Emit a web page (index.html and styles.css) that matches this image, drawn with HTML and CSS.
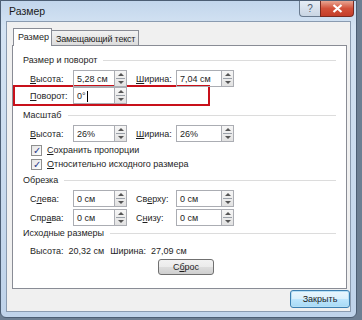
FILE: index.html
```html
<!DOCTYPE html>
<html lang="ru">
<head>
    <meta charset="UTF-8">
    <title>Размер</title>
    <link rel="stylesheet" href="styles.css">
</head>
<body>
    <div class="window">
        <div class="titlebar">
            <span class="title">Размер</span>
            <div class="caption-buttons">
                <span class="cap-btn help">?</span>
                <span class="cap-btn close">
                    <svg width="11" height="9" viewBox="0 0 11 9"><path d="M1.5 1 L9.5 8 M9.5 1 L1.5 8" stroke="#fff" stroke-width="2.2"/></svg>
                </span>
            </div>
        </div>

        <div class="client">
            <div class="tabs">
                <span class="tab active">Размер</span>
                <span class="tab">Замещающий текст</span>
            </div>

            <div class="panel">
                <!-- Размер и поворот -->
                <div class="group-title">Размер и поворот</div>
                <div class="row first">
                    <span class="label"><u>В</u>ысота:</span>
                    <span class="field"><span class="input">5,28 см</span><span class="spin"></span></span>
                    <span class="label second"><u>Ш</u>ирина:</span>
                    <span class="field"><span class="input wide">7,04 см</span><span class="spin"></span></span>
                </div>
                <div class="row highlight">
                    <span class="label"><u>П</u>оворот:</span>
                    <span class="field"><span class="input">0°<span class="caret"></span></span><span class="spin"></span></span>
                </div>

                <!-- Масштаб -->
                <div class="group-title">Масштаб</div>
                <div class="row first">
                    <span class="label"><u>В</u>ысота:</span>
                    <span class="field"><span class="input">26%</span><span class="spin"></span></span>
                    <span class="label second"><u>Ш</u>ирина:</span>
                    <span class="field"><span class="input wide">26%</span><span class="spin"></span></span>
                </div>
                <div class="check"><span class="box">✓</span><span><u>С</u>охранить пропорции</span></div>
                <div class="check last"><span class="box">✓</span><span><u>О</u>тносительно исходного размера</span></div>

                <!-- Обрезка -->
                <div class="group-title">Обрезка</div>
                <div class="row first">
                    <span class="label">С<u>л</u>ева:</span>
                    <span class="field"><span class="input">0 см</span><span class="spin"></span></span>
                    <span class="label second">Св<u>е</u>рху:</span>
                    <span class="field"><span class="input wide">0 см</span><span class="spin"></span></span>
                </div>
                <div class="row">
                    <span class="label">Спр<u>а</u>ва:</span>
                    <span class="field"><span class="input">0 см</span><span class="spin"></span></span>
                    <span class="label second">С<u>н</u>изу:</span>
                    <span class="field"><span class="input wide">0 см</span><span class="spin"></span></span>
                </div>

                <!-- Исходные размеры -->
                <div class="group-title">Исходные размеры</div>
                <div class="orig">
                    <span>Высота:</span><span>20,32 см</span><span class="gap">Ширина:</span><span>27,09 см</span>
                </div>
                <div class="reset-line">
                    <span class="button reset">С<u>б</u>рос</span>
                </div>
            </div>

            <div class="footer">
                <span class="button close-btn">Закрыть</span>
            </div>
        </div>
    </div>
</body>
</html>
```

FILE: styles.css
```css
* {
    margin: 0;
    padding: 0;
    box-sizing: border-box;
}

body {
    width: 362px;
    height: 320px;
    overflow: hidden;
    background: #6d7f93;
    font-family: "Liberation Sans", Arial, sans-serif;
    font-size: 9px;
    color: #1e1e1e;
}

u {
    text-decoration: underline;
    text-underline-offset: 1px;
}

/* Window frame */
.window {
    width: 357px;
    height: 318px;
    background: linear-gradient(180deg, #c2d6ec 0%, #d4e3f3 8%, #bfd3ea 100%);
    border: 1px solid #4c5e74;
    border-radius: 0 0 6px 6px;
    padding: 0 5px 5px 5px;
    display: flex;
    flex-direction: column;
}

.titlebar {
    height: 20px;
    display: flex;
    align-items: flex-start;
    justify-content: space-between;
}

.title {
    font-size: 10.5px;
    padding: 4px 0 0 3px;
    color: #1a1a1a;
}

.caption-buttons {
    display: flex;
    margin-right: -3px;
}

.cap-btn {
    height: 16px;
    display: flex;
    align-items: center;
    justify-content: center;
    border: 1px solid #6a7b8f;
    border-top: none;
}

.help {
    width: 21px;
    background: linear-gradient(180deg, #e6edf5, #c9d5e3);
    color: #4c5a6c;
    font-size: 10px;
    border-radius: 0 0 0 4px;
    border-right: none;
}

.close {
    width: 34px;
    background: linear-gradient(180deg, #e8a592 0%, #d2513a 50%, #c43e2a 100%);
    border-color: #7a2a20;
    border-radius: 0 0 4px 0;
}

/* Client area */
.client {
    flex: 1;
    background: #f0f0f0;
    border: 1px solid #8a9bb0;
    padding: 6px 2px 0 5px;
    display: flex;
    flex-direction: column;
}

.tabs {
    display: flex;
    height: 17px;
    padding-left: 2px;
    position: relative;
    z-index: 1;
}

.tab {
    border: 1px solid #898c95;
    border-bottom: none;
    background: linear-gradient(180deg, #f2f2f2, #dcdcdc);
    padding: 3px 3px 0 4px;
    margin-top: 2px;
    margin-left: -1px;
    letter-spacing: -0.2px;
}

.tab.active {
    background: #fff;
    margin-top: 0;
    width: 39px;
    padding: 3px 0 0 4px;
    height: 18px;
    letter-spacing: 0;
    position: relative;
    z-index: 2;
}

.panel {
    background: #fff;
    border: 1px solid #898c95;
    height: 244px;
    margin-right: 1px;
    padding: 8px 10px 0 10px;
}

.group-title {
    display: flex;
    align-items: center;
    gap: 6px;
    height: 12px;
    color: #1e1e1e;
}

.group-title::after {
    content: "";
    flex: 1;
    border-top: 1px solid #dcdcdc;
}

.row {
    display: flex;
    align-items: center;
    height: 19px;
    padding-left: 7px;
}

.row.first {
    margin-top: 3px;
}

.label {
    width: 43px;
}

.label.second {
    width: 40px;
    margin-left: 9px;
}

.field {
    display: flex;
    height: 17px;
}

.input {
    width: 41px;
    border: 1px solid #abadb3;
    border-right: none;
    padding: 1px 0 0 3px;
    display: flex;
    align-items: center;
}

.input.wide {
    width: 45px;
}

.caret {
    width: 1px;
    height: 11px;
    background: #000;
    margin-left: 1px;
}

.spin {
    width: 13px;
    border: 1px solid #abadb3;
    background:
        linear-gradient(#9aa0a8, #9aa0a8) center 7px / 9px 1px no-repeat,
        linear-gradient(180deg, #f6f6f6, #e2e2e2);
    position: relative;
}

.spin::before,
.spin::after {
    content: "";
    position: absolute;
    left: 3px;
    border-left: 3px solid transparent;
    border-right: 3px solid transparent;
}

.spin::before {
    top: 2px;
    border-bottom: 3px solid #555;
}

.spin::after {
    bottom: 2px;
    border-top: 3px solid #555;
}

.row.first + .highlight {
    margin: -3px 0 3px -10px;
}

.highlight {
    padding-left: 15px;
    width: 197px;
    height: 21px;
    border: 2px solid #c8101a;
}

.check {
    display: flex;
    align-items: center;
    gap: 5px;
    height: 14px;
    padding-left: 8px;
}

.check.last {
    margin-bottom: 3px;
}

.box {
    width: 11px;
    height: 11px;
    border: 1px solid #8f8f8f;
    background: linear-gradient(135deg, #e4e4e4, #fff);
    color: #2a3a8a;
    font-size: 10px;
    line-height: 9px;
    text-align: center;
}

.orig {
    display: flex;
    height: 17px;
    margin-top: 3px;
    align-items: center;
    padding-left: 7px;
    gap: 5px;
}

.orig .gap {
    margin-left: 1px;
}

.reset-line {
    display: flex;
    padding-left: 135px;
}

.button {
    display: flex;
    align-items: center;
    justify-content: center;
    height: 16px;
    border: 1px solid #707070;
    border-radius: 3px;
    background: linear-gradient(180deg, #f2f2f2 0%, #ebebeb 50%, #dddddd 51%, #cfcfcf 100%);
}

.reset {
    width: 56px;
}

.footer {
    display: flex;
    justify-content: flex-end;
    padding-top: 1px;
    margin-right: -2px;
}

.close-btn {
    width: 60px;
    height: 18px;
    border-color: #3c7fb1;
    box-shadow: inset 0 0 0 1px #b6e0f6;
    background: linear-gradient(180deg, #eaf6fd 0%, #d9f0fc 50%, #bee6fd 51%, #a7d9f5 100%);
}
```
